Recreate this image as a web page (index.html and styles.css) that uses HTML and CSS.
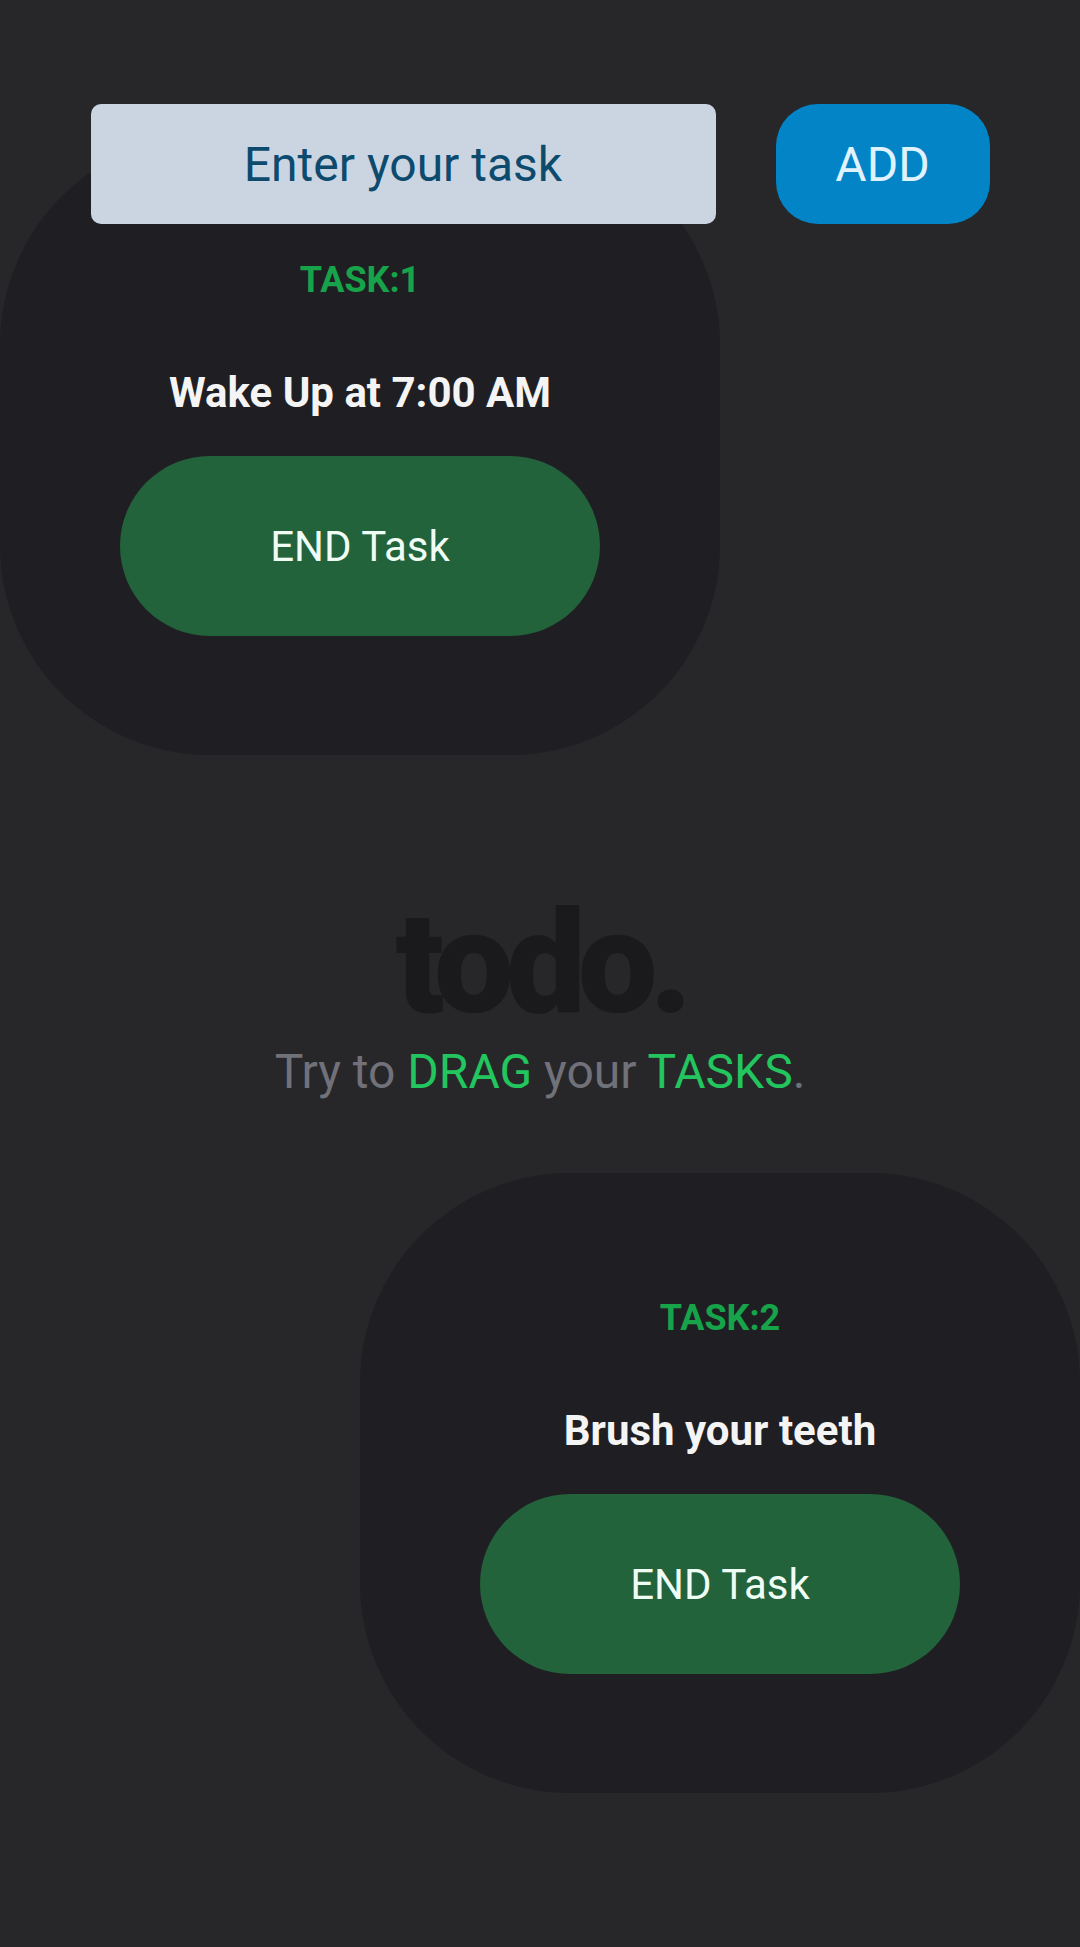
FILE: index.html
```html
<!DOCTYPE html>
<html lang="en">
<head>
<meta charset="utf-8">
<title>todo.</title>
<link rel="stylesheet" href="styles.css">
</head>
<body>
<main class="board">
  <form class="task-form" onsubmit="return false;">
    <input class="task-input" type="text" placeholder="Enter your task">
    <button class="add-btn" type="submit">ADD</button>
  </form>

  <section class="hero">
    <h1 class="logo">todo.</h1>
    <p class="tagline">Try to <span class="accent">DRAG</span> your <span class="accent">TASKS</span>.</p>
  </section>

  <div class="task-card card-one">
    <h3 class="task-label">TASK:1</h3>
    <h2 class="task-title">Wake Up at 7:00 AM</h2>
    <button class="end-btn" type="button">END Task</button>
  </div>

  <div class="task-card card-two">
    <h3 class="task-label">TASK:2</h3>
    <h2 class="task-title">Brush your teeth</h2>
    <button class="end-btn" type="button">END Task</button>
  </div>
</main>
</body>
</html>
```

FILE: styles.css
```css
* {
  box-sizing: border-box;
}

html, body {
  margin: 0;
  padding: 0;
  background: #27272a;
}

body {
  font-family: Roboto, "Noto Sans", "Liberation Sans", sans-serif;
}

.board {
  position: relative;
  width: 1080px;
  height: 1947px;
  overflow: hidden;
}

.task-form {
  position: relative;
  z-index: 3;
  display: flex;
  justify-content: center;
  gap: 60px;
  padding-top: 104px;
  margin: 0;
}

.task-input {
  width: 625px;
  height: 120px;
  border: none;
  border-radius: 10px;
  background: #cbd5e1;
  color: #0c4a6e;
  font-family: Roboto, sans-serif;
  font-size: 48px;
  text-align: center;
  outline: none;
  padding: 0 20px;
}

.task-input::placeholder {
  color: #0c4a6e;
  opacity: 1;
}

.add-btn {
  width: 214px;
  height: 120px;
  border: none;
  border-radius: 42px;
  background: #0284c7;
  color: #e0f2fe;
  font-family: Roboto, sans-serif;
  font-size: 48px;
  padding: 0;
}

.hero {
  position: relative;
  z-index: 0;
  margin-top: 670px;
  display: flex;
  flex-direction: column;
  align-items: center;
}

.logo {
  margin: 0;
  font-size: 142px;
  line-height: 140px;
  font-weight: 900;
  letter-spacing: -8px;
  color: #1a1a1c;
}

.tagline {
  margin: 14px 0 0;
  font-size: 48px;
  line-height: 48px;
  color: #71717a;
}

.accent {
  color: #22c55e;
}

.task-card {
  position: absolute;
  z-index: 1;
  width: 720px;
  height: 620px;
  border-radius: 210px;
  background: #1f1f23;
  display: flex;
  flex-direction: column;
  align-items: center;
  padding-top: 124px;
}

.card-one {
  left: 0;
  top: 135px;
}

.card-two {
  left: 360px;
  top: 1173px;
}

.task-label {
  margin: 0;
  font-size: 36px;
  line-height: 42px;
  font-weight: 700;
  color: #16a34a;
}

.task-title {
  margin: 67px 0 0;
  font-size: 42px;
  line-height: 50px;
  font-weight: 700;
  color: #f4f4f5;
}

.end-btn {
  margin-top: 38px;
  width: 480px;
  height: 180px;
  border: none;
  border-radius: 90px;
  background: #22633c;
  color: #f0fdf4;
  font-family: Roboto, sans-serif;
  font-size: 42px;
  padding: 0;
}
```
